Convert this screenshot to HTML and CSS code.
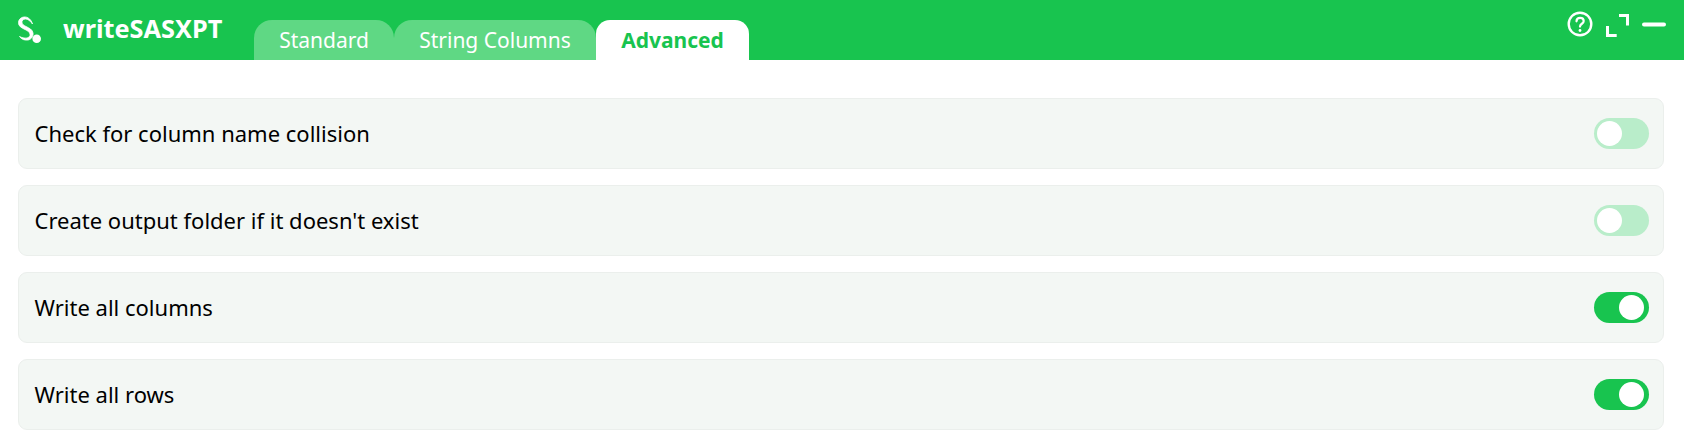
FILE: index.html
```html
<!DOCTYPE html>
<html lang="en">
<head>
<meta charset="utf-8">
<title>writeSASXPT</title>
<link rel="stylesheet" href="styles.css">
</head>
<body>
<header class="header">
  <svg class="logo" width="28" height="28" viewBox="0 0 28 28" fill="none">
    <path d="M17.500 9C16.500 5 13 1.500 9 2C4.500 2.500 2.500 6.500 4 10C5.500 13 9.500 14 12 15.500C14 16.800 15.500 18.500 15 20.500C14.500 22.500 12 23.500 9 23C7.500 22.800 6 22.300 4.500 21.500C6.500 24.500 10 25.500 13 25C16.500 24.500 18.500 21 18 18C17.500 14.500 14 13 11 11.500C8.500 10.200 6.500 9 7 6.500C7.500 4.200 10 3.500 12.500 4.500C14.500 5.300 16 7 17.500 9Z" fill="#fff" stroke="#fff" stroke-width="0.800" stroke-linejoin="round"/>
    <circle cx="21.700" cy="23.700" r="4.300" fill="#fff"/>
  </svg>
  <div class="title">writeSASXPT</div>
  <nav class="tabs">
    <div class="tab tab-standard">Standard</div>
    <div class="tab tab-string">String Columns</div>
    <div class="tab tab-advanced active">Advanced</div>
  </nav>
  <div class="actions">
    <svg width="26" height="26" viewBox="0 0 26 26" fill="none">
      <circle cx="13" cy="13" r="11.300" stroke="#fff" stroke-width="2.400"/>
      <path d="M9.500 10.300c0-2.300 1.500-3.500 3.600-3.500s3.600 1.300 3.600 3.200c0 2.800-3.700 2.700-3.700 5.600" stroke="#fff" stroke-width="2.200" stroke-linecap="round"/>
      <circle cx="13" cy="19.500" r="1.400" fill="#fff"/>
    </svg>
    <svg width="25" height="26" viewBox="0 0 25 26" fill="none">
      <path d="M14 4.500h8.500V14.500M2.500 15V24.500H11.700" stroke="#fff" stroke-width="3"/>
    </svg>
    <svg width="24" height="6" viewBox="0 0 24 6" fill="none">
      <path d="M2 3.500h20" stroke="#fff" stroke-width="4" stroke-linecap="round"/>
    </svg>
  </div>
</header>
<main class="list">
  <div class="row"><span class="label">Check for column name collision</span><span class="toggle off"><span class="knob"></span></span></div>
  <div class="row"><span class="label">Create output folder if it doesn't exist</span><span class="toggle off"><span class="knob"></span></span></div>
  <div class="row"><span class="label">Write all columns</span><span class="toggle on"><span class="knob"></span></span></div>
  <div class="row"><span class="label">Write all rows</span><span class="toggle on"><span class="knob"></span></span></div>
</main>
</body>
</html>
```
FILE: styles.css
```css
* { box-sizing: border-box; }
html, body { margin: 0; padding: 0; background: #fff; }
body { font-family: "Noto Sans", sans-serif; color: #000; height: 436px; overflow: hidden; }
.header {
  height: 60px;
  background: #18c44f;
  display: flex;
  align-items: flex-start;
  padding-left: 15px;
}
.logo { margin-top: 15px; flex: none; }
.title { margin-left: 20px; margin-top: 11px; font-size: 25.3px; line-height: 35px; font-weight: 700; color: #fff; width: 191px; white-space: nowrap; }
.tabs { display: flex; align-self: flex-end; height: 40px; }
.tab {
  height: 40px;
  border-radius: 18px 18px 0 0;
  background: #5fd884;
  color: #fff;
  font-size: 21px;
  line-height: 40px;
  text-align: center;
}
.tab-standard { width: 140px; }
.tab-string { width: 202px; }
.tab-advanced { width: 153px; border-radius: 14px 14px 0 0; }
.tab.active { background: #fff; color: #18c44f; font-weight: 700; }
.actions { margin-left: auto; margin-right: 18px; margin-top: 11px; display: flex; align-items: center; gap: 12px; height: 26px; }
.list { padding: 38px 20px 0 18px; display: flex; flex-direction: column; gap: 16px; }
.row {
  height: 71px;
  background: #f3f7f4;
  border: 1px solid #ebefec;
  border-radius: 9px;
  padding: 0 14px 0 15.500px;
  display: flex;
  align-items: center;
  justify-content: space-between;
  font-size: 22px;
}
.label { padding-bottom: 2px; }
.toggle { width: 55px; height: 31px; border-radius: 16px; padding: 3px; display: flex; }
.toggle.off { background: #b9edca; justify-content: flex-start; }
.toggle.on { background: #18c44f; justify-content: flex-end; padding-right: 5px; }
.knob { width: 25px; height: 25px; border-radius: 50%; background: #fff; }
```
